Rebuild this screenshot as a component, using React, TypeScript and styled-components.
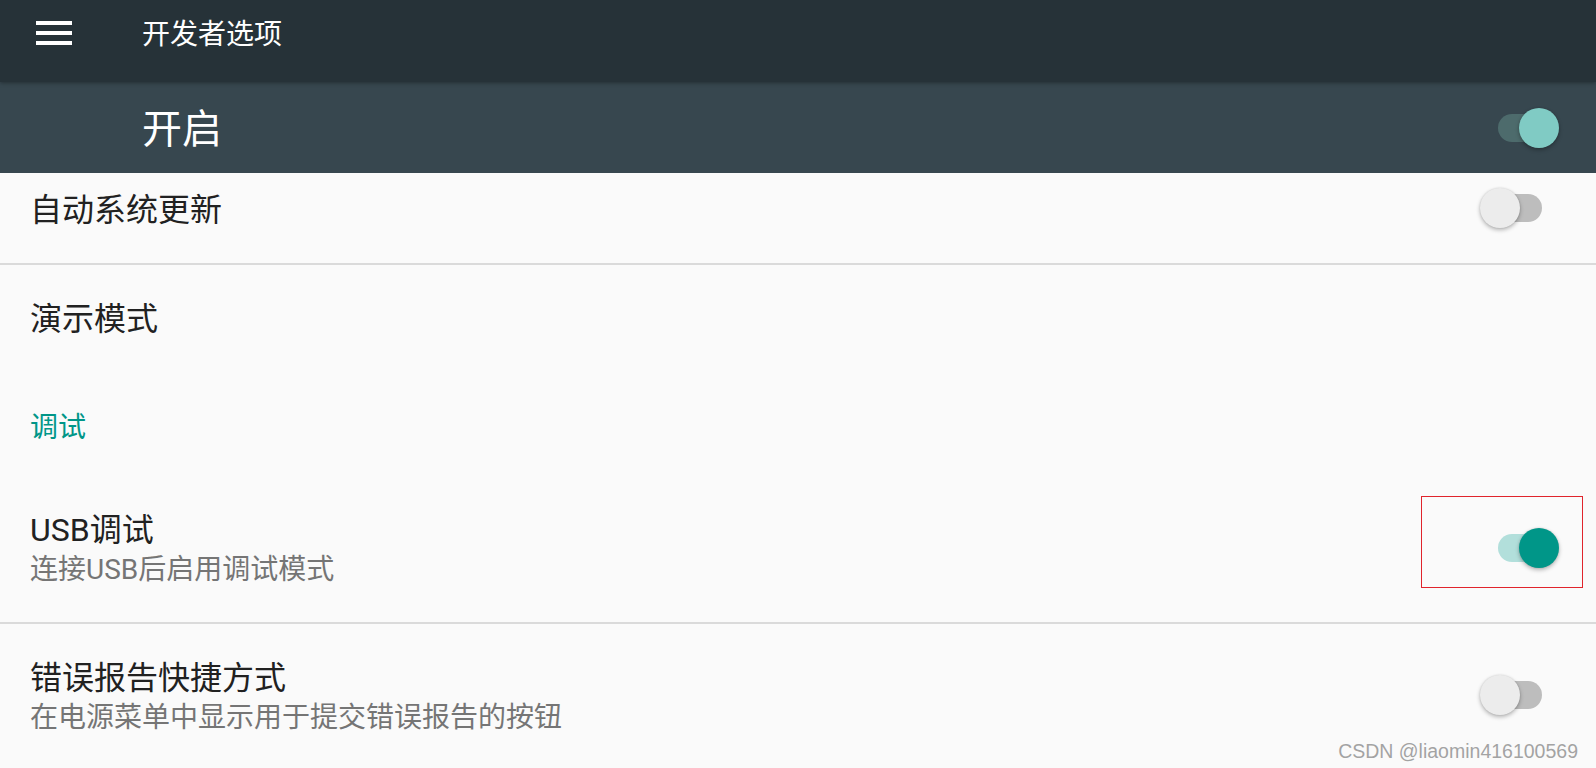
import styled, { createGlobalStyle } from 'styled-components'

const GlobalStyle = createGlobalStyle`
  html, body {
    margin: 0;
    padding: 0;
    background: #fafafa;
  }
  body {
    font-family: Roboto, "Noto Sans CJK SC", "Noto Sans", sans-serif;
  }
`

const Page = styled.div`
  position: relative;
  height: 768px;
  overflow: hidden;
  background: #fafafa;
`

const Toolbar = styled.div`
  position: relative;
  z-index: 2;
  display: flex;
  align-items: center;
  height: 82px;
  padding: 0 0 16px 36px;
  box-sizing: border-box;
  background: #263238;
  box-shadow: 0 1px 4px rgba(0, 0, 0, 0.35);
`

const MenuButton = styled.div`
  display: flex;
  width: 36px;
  height: 24px;
`

const ToolbarTitle = styled.div`
  margin-left: 70px;
  color: #ffffff;
  font-size: 28px;
  line-height: 36px;
  padding-top: 4px;
`

const MasterBar = styled.div`
  display: flex;
  align-items: center;
  justify-content: space-between;
  height: 91px;
  padding: 0 36px 0 142px;
  box-sizing: border-box;
  background: #37474f;
`

const MasterLabel = styled.div`
  color: #ffffff;
  font-size: 40px;
  line-height: 48px;
  padding-top: 4px;
`

const Row = styled.div<{ $h: number; $pb?: number; $divider?: boolean }>`
  display: flex;
  align-items: center;
  justify-content: space-between;
  height: ${(p) => p.$h}px;
  padding: 0 36px ${(p) => p.$pb || 0}px 30px;
  box-sizing: border-box;
  border-bottom: ${(p) => (p.$divider ? '2px solid #dadada' : 'none')};
`

const TextBlock = styled.div`
  display: flex;
  flex-direction: column;
`

const Title = styled.div`
  color: #212121;
  font-size: 32px;
  line-height: 40px;
`

const Summary = styled.div`
  color: #757575;
  font-size: 28px;
  line-height: 40px;
`

const Category = styled.div`
  display: flex;
  align-items: center;
  height: 104px;
  padding-left: 30px;
  color: #009688;
  font-size: 28px;
`

const SwitchBox = styled.div<{ $dy?: number }>`
  position: relative;
  width: 80px;
  height: 40px;
  flex: none;
  margin-top: ${(p) => p.$dy || 0}px;
`

const Track = styled.div<{ $color: string }>`
  position: absolute;
  left: 18px;
  top: 6px;
  width: 44px;
  height: 28px;
  border-radius: 14px;
  background: ${(p) => p.$color};
`

const Thumb = styled.div<{ $on: boolean; $color: string }>`
  position: absolute;
  top: 0;
  left: ${(p) => (p.$on ? 39 : 0)}px;
  width: 40px;
  height: 40px;
  border-radius: 50%;
  background: ${(p) => p.$color};
  box-shadow: 0 2px 4px rgba(0, 0, 0, 0.28), 0 0 2px rgba(0, 0, 0, 0.12);
`

const Marker = styled.div`
  position: absolute;
  left: -59px;
  top: -32px;
  width: 162px;
  height: 92px;
  box-sizing: border-box;
  border: 1px solid #e0242c;
`

const Watermark = styled.div`
  position: absolute;
  right: 18px;
  bottom: 6px;
  color: #a3a3a3;
  font-family: "Liberation Sans", Arial, sans-serif;
  font-size: 19.5px;
  line-height: 22px;
  text-shadow: 0 0 1px #ffffff;
`

type SwitchProps = {
  on: boolean
  track: string
  thumb: string
  marked?: boolean
  dy?: number
}

function Switch({ on, track, thumb, marked, dy }: SwitchProps) {
  return (
    <SwitchBox $dy={dy}>
      <Track $color={track} />
      <Thumb $on={on} $color={thumb} />
      {marked && <Marker />}
    </SwitchBox>
  )
}

export default function App() {
  return (
    <Page>
      <GlobalStyle />
      <Toolbar>
        <MenuButton>
          <svg width="36" height="24" viewBox="0 0 36 24">
            <rect x="0" y="0" width="36" height="4" fill="#fff" />
            <rect x="0" y="10" width="36" height="4" fill="#fff" />
            <rect x="0" y="20" width="36" height="4" fill="#fff" />
          </svg>
        </MenuButton>
        <ToolbarTitle>开发者选项</ToolbarTitle>
      </Toolbar>
      <MasterBar>
        <MasterLabel>开启</MasterLabel>
        <Switch on track="#4d6b6c" thumb="#80cbc4" />
      </MasterBar>

      <Row $h={92} $pb={16} $divider>
        <Title>自动系统更新</Title>
        <Switch on={false} track="#bdbdbd" thumb="#ececec" dy={-4} />
      </Row>
      <Row $h={108}>
        <Title>演示模式</Title>
      </Row>
      <Category>调试</Category>
      <Row $h={147} $divider>
        <TextBlock>
          <Title>USB调试</Title>
          <Summary>连接USB后启用调试模式</Summary>
        </TextBlock>
        <Switch on track="#b2dfdb" thumb="#009688" marked dy={-4} />
      </Row>
      <Row $h={147}>
        <TextBlock>
          <Title>错误报告快捷方式</Title>
          <Summary>在电源菜单中显示用于提交错误报告的按钮</Summary>
        </TextBlock>
        <Switch on={false} track="#bdbdbd" thumb="#ececec" dy={-6} />
      </Row>

      <Watermark>CSDN @liaomin416100569</Watermark>
    </Page>
  )
}
